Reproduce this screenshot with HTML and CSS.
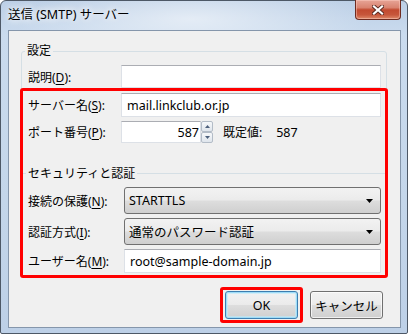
FILE: index.html
```html
<!DOCTYPE html>
<html lang="ja">
  <head>
    <meta charset="UTF-8" />
    <title>送信 (SMTP) サーバー</title>
    <link rel="stylesheet" href="styles.css">
  </head>
  <body>
    <div class="window">
      <div class="titlebar">
        <span class="title">送信 (SMTP) サーバー</span>
        <button class="close" aria-label="閉じる">
          <svg width="12" height="10" viewBox="0 0 12 10">
            <path d="M2 1.5 10 8.5 M10 1.5 2 8.5" stroke="#5a2a22" stroke-width="4" stroke-linecap="square" />
            <path d="M2 1.5 10 8.5 M10 1.5 2 8.5" stroke="#fff" stroke-width="2.2" stroke-linecap="square" />
          </svg>
        </button>
      </div>

      <div class="client">
        <fieldset class="group">
          <legend>設定</legend>
          <div class="row r-desc">
            <label for="desc">説明(<u>D</u>):</label>
            <input class="field" id="desc" type="text" />
          </div>

          <div class="mark">
            <div class="row r-host">
              <label for="host">サーバー名(<u>S</u>):</label>
              <input class="field" id="host" type="text" value="mail.linkclub.or.jp" />
            </div>
            <div class="row r-port">
              <label for="port">ポート番号(<u>P</u>):</label>
              <div class="spin">
                <input class="field num" id="port" type="text" value="587" />
                <span class="spin-btns">
                  <span><svg width="5" height="3" viewBox="0 0 5 3"><path d="M0 3 2.5 0 5 3Z" fill="#4d607c" /></svg></span>
                  <span><svg width="5" height="3" viewBox="0 0 5 3"><path d="M0 0 2.5 3 5 0Z" fill="#4d607c" /></svg></span>
                </span>
              </div>
              <span class="default-label">既定値:</span>
              <span class="default-value">587</span>
            </div>

            <div class="sep"><span>セキュリティと認証</span></div>

            <div class="row wide r-select">
              <label>接続の保護(<u>N</u>):</label>
              <div class="select">
                <span>STARTTLS</span>
                <svg width="7" height="4" viewBox="0 0 7 4"><path d="M0 0h7L3.5 4Z" fill="#000" /></svg>
              </div>
            </div>
            <div class="row wide r-select">
              <label>認証方式(<u>I</u>):</label>
              <div class="select">
                <span>通常のパスワード認証</span>
                <svg width="7" height="4" viewBox="0 0 7 4"><path d="M0 0h7L3.5 4Z" fill="#000" /></svg>
              </div>
            </div>
            <div class="row wide r-user">
              <label for="user">ユーザー名(<u>M</u>):</label>
              <input class="field" id="user" type="text" value="root@sample-domain.jp" />
            </div>
          </div>
        </fieldset>

        <div class="actions">
          <div class="ok-mark">
            <button class="btn default">OK</button>
          </div>
          <button class="btn">キャンセル</button>
        </div>
      </div>
    </div>
  </body>
</html>
```

FILE: styles.css
```css
* {
  box-sizing: border-box;
}

body {
  margin: 0;
  font-family: "Noto Sans", "Noto Sans CJK JP", sans-serif;
  font-size: 12px;
  color: #000;
}

u {
  text-decoration-thickness: 1px;
  text-underline-offset: 2px;
}

/* window frame */
.window {
  width: 408px;
  height: 334px;
  border: 1px solid #4d5866;
  border-radius: 6px 6px 2px 2px;
  padding: 0 6px 5px 7px;
  display: flex;
  flex-direction: column;
  background:
    radial-gradient(ellipse 180px 40px at 190px 18px, rgba(255, 255, 255, 0.55), rgba(255, 255, 255, 0)),
    linear-gradient(#bccfe6, #cadbee 34px, #c4d6ea 60%, #bdd0e7);
}

.titlebar {
  height: 29px;
  display: flex;
  justify-content: space-between;
  align-items: flex-start;
}

.title {
  margin-top: 6px;
  line-height: 16px;
  font-size: 12.5px;
  text-shadow: 0 0 6px #fff, 0 0 10px #fff;
}

.close {
  width: 46px;
  height: 20px;
  margin-top: -1px;
  padding: 0;
  border: 1px solid #6e2b20;
  border-top: none;
  border-radius: 0 0 4px 4px;
  display: flex;
  align-items: center;
  justify-content: center;
  background: linear-gradient(#e7a597 0%, #d98370 40%, #c24a30 52%, #c7563b 78%, #de8a6a 100%);
  box-shadow: inset 0 0 0 1px rgba(255, 210, 200, 0.45);
}

/* client area */
.client {
  flex: 1;
  border: 1px solid #8596ab;
  background: #f0f0f0;
  display: flex;
  flex-direction: column;
}

.group {
  margin: 12px 13px 0 12px;
  padding: 6px 5px 0 6px;
  border: 1px solid #d5dfe5;
  border-radius: 3px;
  min-width: 0;
}

.group legend {
  margin-left: -3px;
  padding: 0 2px;
  line-height: 16px;
}

.row {
  display: flex;
  align-items: center;
}

.row label {
  width: 93px;
  flex: none;
  white-space: nowrap;
}

.row.wide label {
  width: 96px;
}

.field {
  flex: 1;
  min-width: 0;
  height: 100%;
  border: 1px solid #dde1e7;
  border-top-color: #abadb3;
  background: #fff;
  padding: 0 5px;
  font: inherit;
  font-size: 12.5px;
  color: #000;
  outline: none;
}

.r-desc { height: 23px; }
.r-host { height: 24px; }
.r-port { height: 22px; margin-top: 4px; }
.r-select { height: 27px; margin-top: 4px; }
.r-user { height: 24px; margin-top: 4px; }
.sep + .r-select { margin-top: 6px; }

/* red highlight around the server fields */
.mark {
  position: relative;
  border: 3px solid #f00;
  border-radius: 3px;
  margin: 0 -7px -2px -8px;
  padding: 2px 4px 2px 5px;
}

.spin {
  display: flex;
  height: 100%;
}

.field.num {
  width: 80px;
  flex: none;
  text-align: right;
  padding-right: 1px;
}

.spin-btns {
  width: 12px;
  display: flex;
  flex-direction: column;
}

.spin-btns span {
  flex: 1;
  display: flex;
  align-items: center;
  justify-content: center;
  border: 1px solid #b3bcc7;
  border-radius: 2px;
  background: linear-gradient(#f6f8fa, #dfe5ec);
}

.default-label {
  margin-left: 10px;
}

.default-value {
  margin-left: 14px;
  font-size: 12.5px;
}

.sep {
  display: flex;
  align-items: center;
  gap: 2px;
  height: 16px;
  margin: 22px -4px 0 -5px;
}

.sep::before,
.sep::after {
  content: "";
  border-top: 1px solid #d5dfe5;
}

.sep::before {
  width: 3px;
}

.sep::after {
  flex: 1;
}

.select {
  flex: 1;
  height: 100%;
  display: flex;
  align-items: center;
  justify-content: space-between;
  padding: 0 7px 0 4px;
  border: 1px solid #707070;
  border-radius: 3px;
  font-size: 12.5px;
  background: linear-gradient(#f2f2f2 0%, #ebebeb 48%, #dddddd 52%, #cfcfcf 100%);
}

/* buttons */
.actions {
  display: flex;
  justify-content: flex-end;
  align-items: center;
  gap: 7px;
  margin: 10px 17px 0 0;
}

.ok-mark {
  border: 3px solid #f00;
  border-radius: 3px;
  padding: 1px 2px;
}

.btn {
  width: 73px;
  height: 28px;
  padding: 0;
  border: 1px solid #707070;
  border-radius: 3px;
  font: inherit;
  font-size: 12.5px;
  color: #000;
  background: linear-gradient(#f2f2f2 0%, #ebebeb 48%, #dddddd 52%, #cfcfcf 100%);
  box-shadow: inset 0 0 0 1px rgba(255, 255, 255, 0.7);
}

.btn.default {
  border-color: #3c7fb1;
  box-shadow: inset 0 0 0 1px #9fdcf7, inset 0 0 0 2px rgba(190, 235, 252, 0.6);
}
```
